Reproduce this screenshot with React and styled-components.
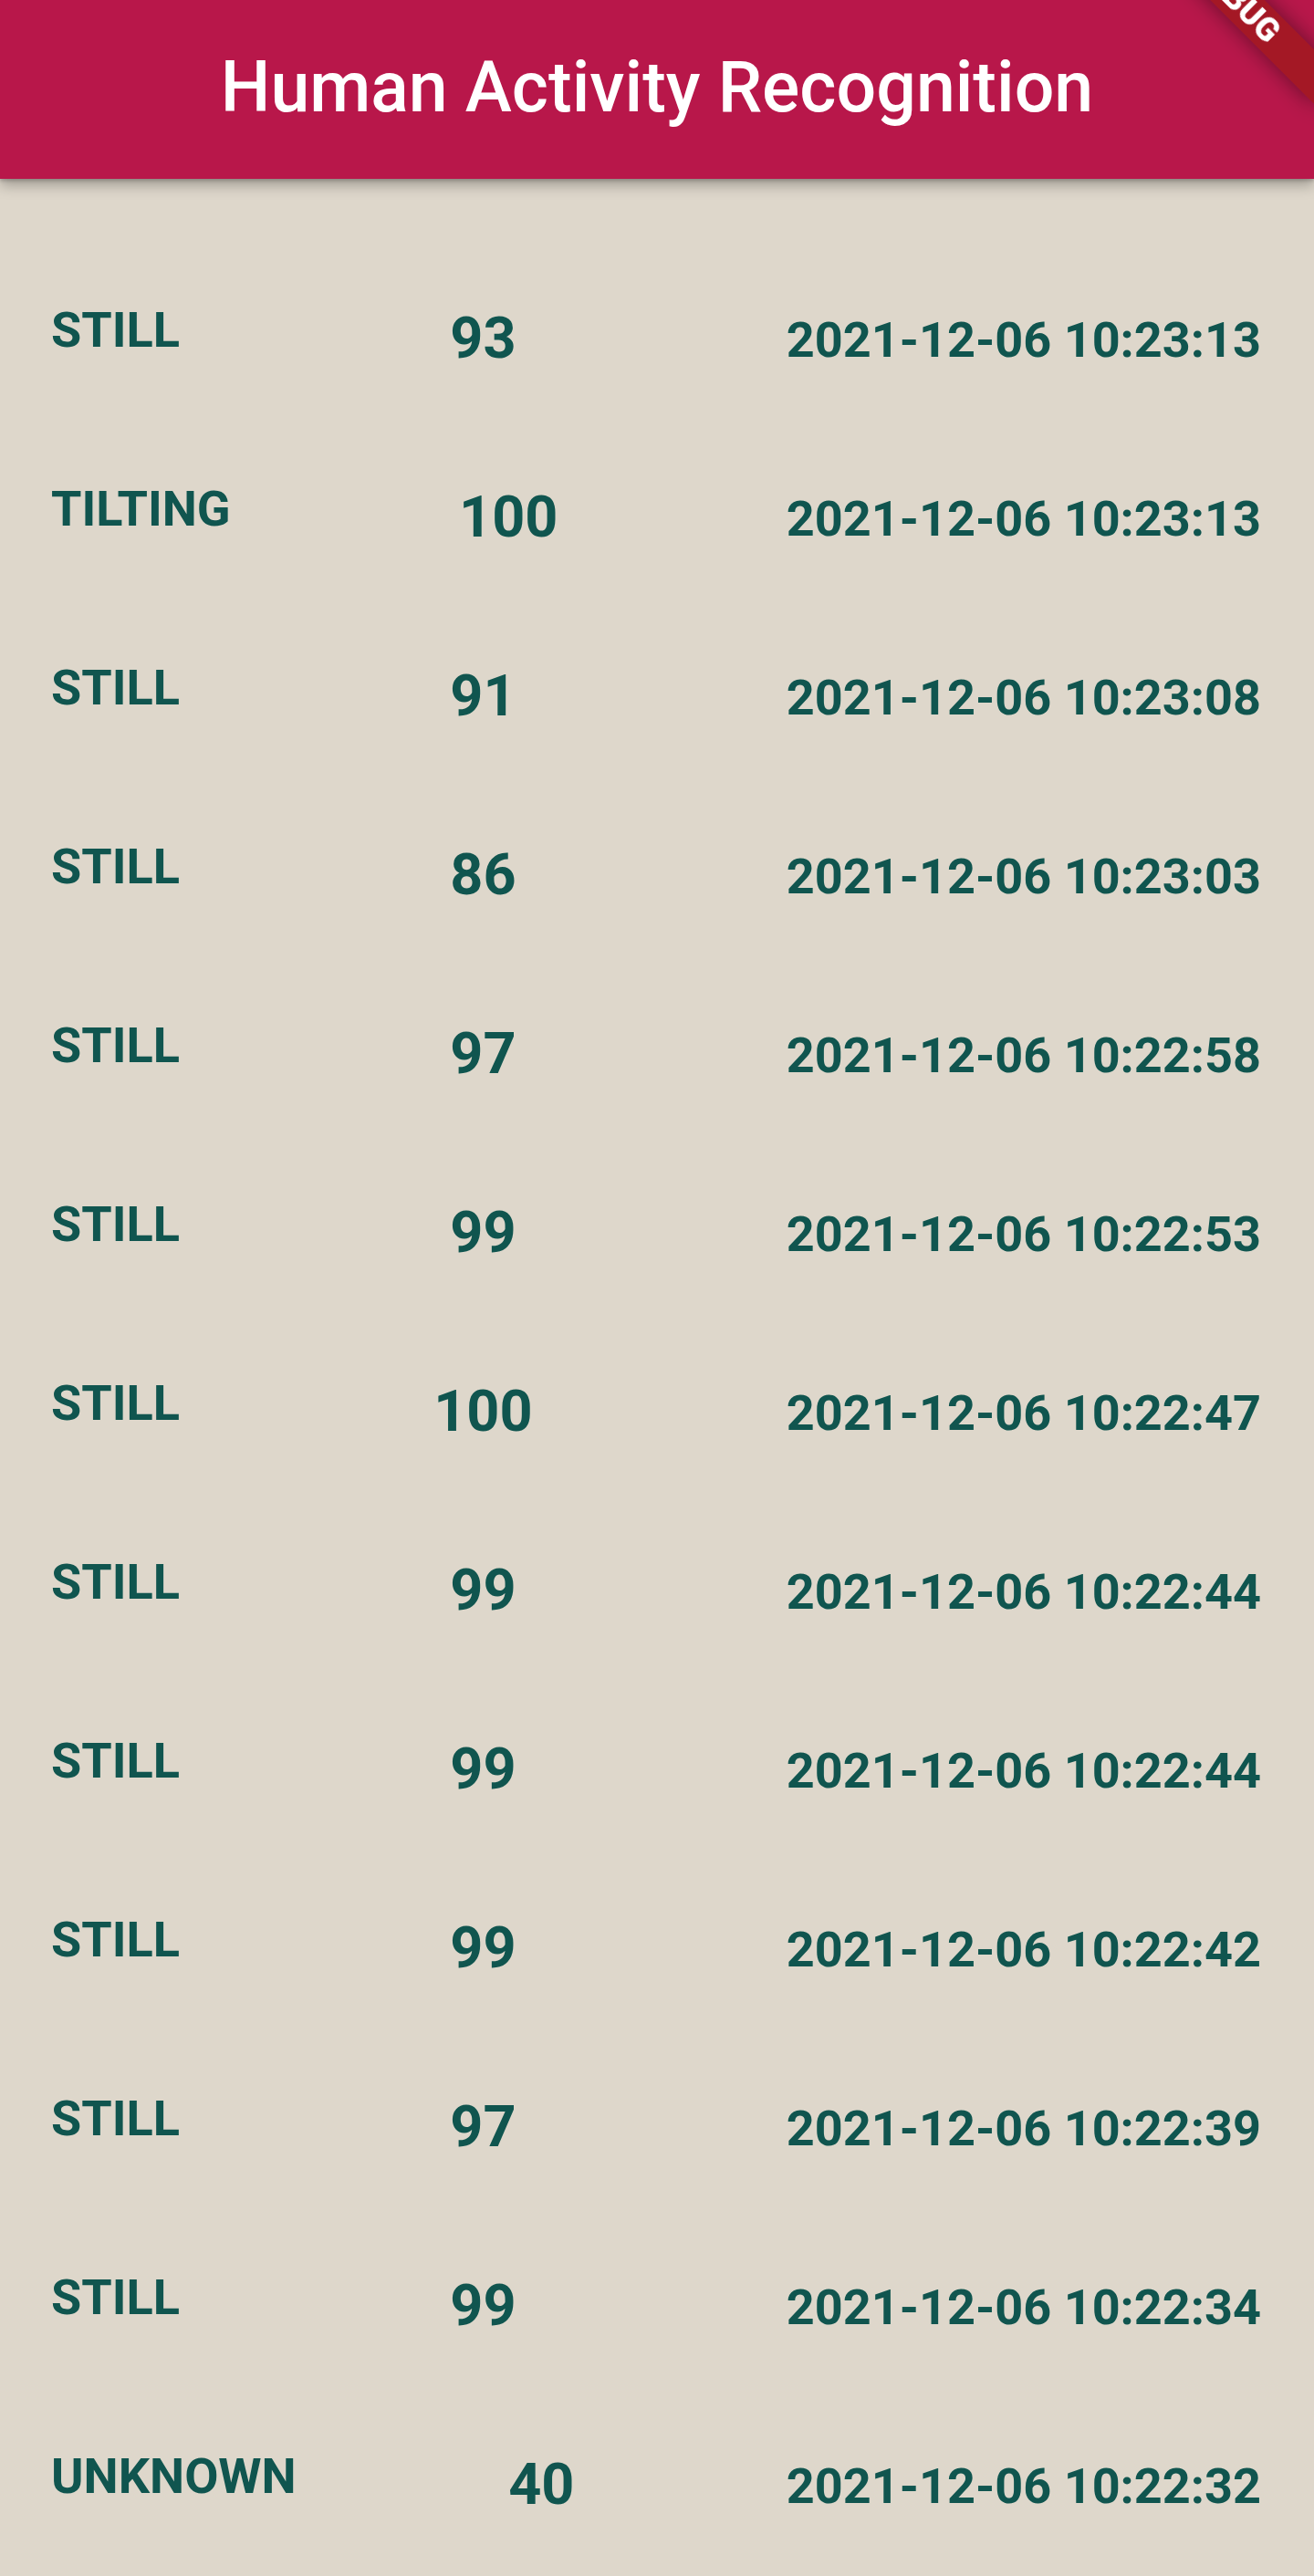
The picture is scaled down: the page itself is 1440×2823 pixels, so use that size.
import React from "react";
import styled, { createGlobalStyle } from "styled-components";

const GlobalStyle = createGlobalStyle`
  html, body {
    margin: 0;
    padding: 0;
    background: #ded7cb;
  }
  * {
    box-sizing: border-box;
  }
`;

const Screen = styled.div`
  position: relative;
  width: 1440px;
  min-height: 2823px;
  overflow: hidden;
  background: #ded7cb;
  font-family: Roboto, "Noto Sans", sans-serif;
`;

const AppBar = styled.header`
  position: sticky;
  top: 0;
  z-index: 2;
  height: 196px;
  display: flex;
  align-items: center;
  justify-content: center;
  background: #b8174a;
  box-shadow: 0 7px 14px rgba(0, 0, 0, 0.28), 0 2px 4px rgba(0, 0, 0, 0.2);
`;

const Title = styled.h1`
  margin: 0 0 4px;
  font-size: 77px;
  font-weight: 500;
  color: #ffffff;
  letter-spacing: 0;
`;

// flutter debug ribbon, sits over the top right corner
const DebugBanner = styled.div`
  position: absolute;
  top: -21px;
  left: 1216px;
  width: 280px;
  height: 42px;
  z-index: 3;
  transform: rotate(45deg);
  background: rgba(160, 24, 30, 0.85);
  box-shadow: 0 0 24px rgba(0, 0, 0, 0.45);
  color: #ffffff;
  font-size: 36px;
  font-weight: 900;
  line-height: 42px;
  text-align: center;
`;

const List = styled.main`
  padding-top: 78px;
`;

const Row = styled.div`
  height: 196px;
  display: flex;
  align-items: center;
  justify-content: space-between;
  padding: 0 58px 0 56px;
  color: #10554f;
  font-weight: 700;
`;

const Activity = styled.span`
  font-size: 54px;
  padding-bottom: 22px;
`;

const Confidence = styled.span`
  font-size: 63px;
  padding-bottom: 4px;
`;

const Time = styled.span`
  font-size: 54px;
`;

const records = [
  ["STILL", 93, "2021-12-06 10:23:13"],
  ["TILTING", 100, "2021-12-06 10:23:13"],
  ["STILL", 91, "2021-12-06 10:23:08"],
  ["STILL", 86, "2021-12-06 10:23:03"],
  ["STILL", 97, "2021-12-06 10:22:58"],
  ["STILL", 99, "2021-12-06 10:22:53"],
  ["STILL", 100, "2021-12-06 10:22:47"],
  ["STILL", 99, "2021-12-06 10:22:44"],
  ["STILL", 99, "2021-12-06 10:22:44"],
  ["STILL", 99, "2021-12-06 10:22:42"],
  ["STILL", 97, "2021-12-06 10:22:39"],
  ["STILL", 99, "2021-12-06 10:22:34"],
  ["UNKNOWN", 40, "2021-12-06 10:22:32"],
];

export default function App() {
  return (
    <Screen>
      <GlobalStyle />
      <AppBar>
        <Title>Human Activity Recognition</Title>
      </AppBar>
      <List>
        {records.map(([activity, confidence, time], i) => (
          <Row key={i}>
            <Activity>{activity}</Activity>
            <Confidence>{confidence}</Confidence>
            <Time>{time}</Time>
          </Row>
        ))}
      </List>
      <DebugBanner>DEBUG</DebugBanner>
    </Screen>
  );
}
